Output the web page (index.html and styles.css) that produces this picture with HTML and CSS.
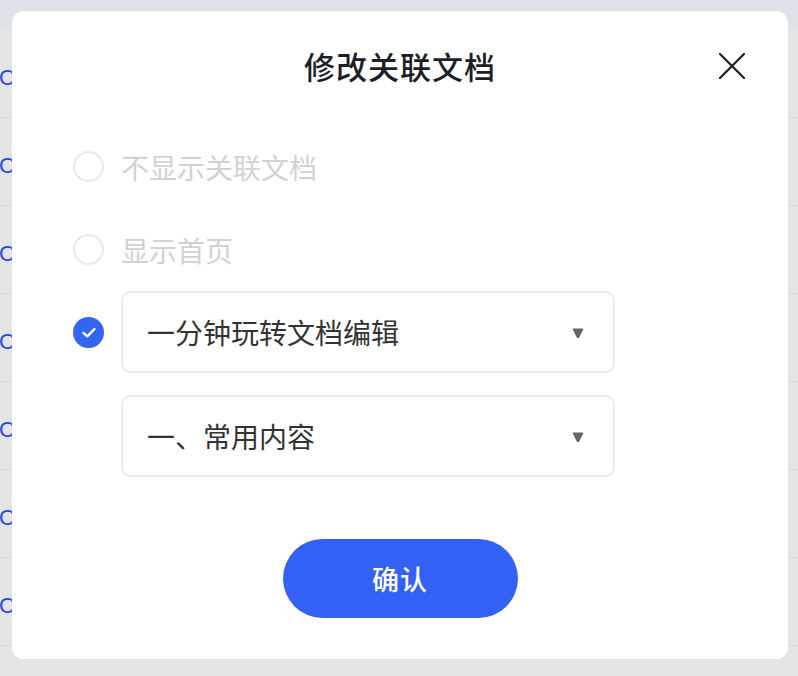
FILE: index.html
```html
<!DOCTYPE html>
<html lang="zh-CN">
<head>
  <meta charset="UTF-8">
  <meta name="viewport" content="width=device-width, initial-scale=1.0">
  <title>修改关联文档</title>
  <link rel="stylesheet" href="styles.css">
</head>
<body>
  <div class="page">
    <div class="topbar"></div>
    <div class="row"><span class="row-link">C</span></div>
    <div class="row"><span class="row-link">C</span></div>
    <div class="row"><span class="row-link">C</span></div>
    <div class="row"><span class="row-link">C</span></div>
    <div class="row"><span class="row-link">C</span></div>
    <div class="row"><span class="row-link">C</span></div>
    <div class="row"><span class="row-link">C</span></div>
  </div>

  <div class="modal">
    <div class="modal-header">
      <span></span>
      <h2 class="modal-title">修改关联文档</h2>
      <button class="close-btn" aria-label="关闭">
        <svg width="26" height="26" viewBox="0 0 26 26">
          <path d="M1 1 L25 25 M25 1 L1 25" stroke="#1c1f26" stroke-width="2.2" stroke-linecap="round" fill="none"/>
        </svg>
      </button>
    </div>

    <div class="options">
      <label class="option">
        <span class="radio"></span>
        <span class="option-text">不显示关联文档</span>
      </label>
      <label class="option">
        <span class="radio"></span>
        <span class="option-text">显示首页</span>
      </label>
      <div class="option-select">
        <span class="radio checked">
          <svg width="16" height="13" viewBox="0 0 16 13">
            <path d="M2.5 6.8 L6.3 10.3 L13.5 3" stroke="#fff" stroke-width="2.4" stroke-linecap="round" stroke-linejoin="round" fill="none"/>
          </svg>
        </span>
        <div class="select">
          <span>一分钟玩转文档编辑</span>
          <svg class="caret" width="12" height="11" viewBox="0 0 12 11">
            <path d="M1.6 0.5 H10.4 Q11.8 0.5 11 1.9 L7.2 9.4 Q6 11 4.8 9.4 L1 1.9 Q0.2 0.5 1.6 0.5 Z" fill="#666"/>
          </svg>
        </div>
      </div>
      <div class="select select-sub">
        <span>一、常用内容</span>
        <svg class="caret" width="12" height="11" viewBox="0 0 12 11">
          <path d="M1.6 0.5 H10.4 Q11.8 0.5 11 1.9 L7.2 9.4 Q6 11 4.8 9.4 L1 1.9 Q0.2 0.5 1.6 0.5 Z" fill="#666"/>
        </svg>
      </div>
    </div>

    <div class="modal-footer">
      <button class="confirm-btn">确认</button>
    </div>
  </div>
</body>
</html>
```

FILE: styles.css
```css
* {
  box-sizing: border-box;
}
body {
  margin: 0;
  font-family: "Noto Sans CJK SC", "Noto Sans", sans-serif;
  background: #e5e5e5;
  overflow: hidden;
}
.page {
  width: 798px;
  height: 676px;
}
.topbar {
  height: 30px;
  background: #dde1e8;
}
.row {
  height: 88px;
  border-bottom: 1px solid #d6d6d6;
  display: flex;
  align-items: center;
  padding-top: 8px;
}
.row-link {
  font-family: "Liberation Sans", Arial, sans-serif;
  font-size: 22px;
  color: #2447e3;
  margin-left: -1px;
}

.modal {
  position: absolute;
  left: 12px;
  top: 11px;
  width: 776px;
  height: 648px;
  background: #fff;
  border-radius: 12px;
}
.modal-header {
  height: 108px;
  display: grid;
  grid-template-columns: 1fr auto 1fr;
  align-items: center;
  padding: 0 43px;
}
.modal-title {
  margin: 0;
  font-size: 31px;
  font-weight: 500;
  color: #1c1f26;
  letter-spacing: 1px;
}
.close-btn {
  justify-self: end;
  background: none;
  border: none;
  padding: 0;
  width: 26px;
  height: 26px;
  margin-top: 2px;
  cursor: pointer;
}

.options {
  padding-left: 61px;
  margin-top: 6px;
}
.option {
  height: 83px;
  display: flex;
  align-items: center;
  gap: 17px;
}
.radio {
  width: 31px;
  height: 31px;
  border-radius: 50%;
  border: 2px solid #e9e9e9;
  flex-shrink: 0;
  display: flex;
  align-items: center;
  justify-content: center;
}
.radio.checked {
  border: none;
  background: #3266f0;
}
.option-text {
  font-size: 28px;
  color: #d2d2d2;
}
.option-select {
  display: flex;
  align-items: center;
  gap: 17px;
}
.select {
  width: 494px;
  height: 82px;
  border: 2px solid #ebebeb;
  border-radius: 10px;
  display: flex;
  align-items: center;
  justify-content: space-between;
  padding: 0 29px 0 24px;
  font-size: 28px;
  color: #333;
}
.select-sub {
  margin: 22px 0 0 48px;
}
.caret {
  display: block;
  margin-top: 2px;
}

.modal-footer {
  display: flex;
  justify-content: center;
  margin-top: 62px;
}
.confirm-btn {
  width: 235px;
  height: 79px;
  border: none;
  border-radius: 40px;
  background: #3361f5;
  color: #fff;
  font-family: "Noto Sans CJK SC", sans-serif;
  font-size: 27px;
  font-weight: 500;
  letter-spacing: 1px;
  cursor: pointer;
}
```
